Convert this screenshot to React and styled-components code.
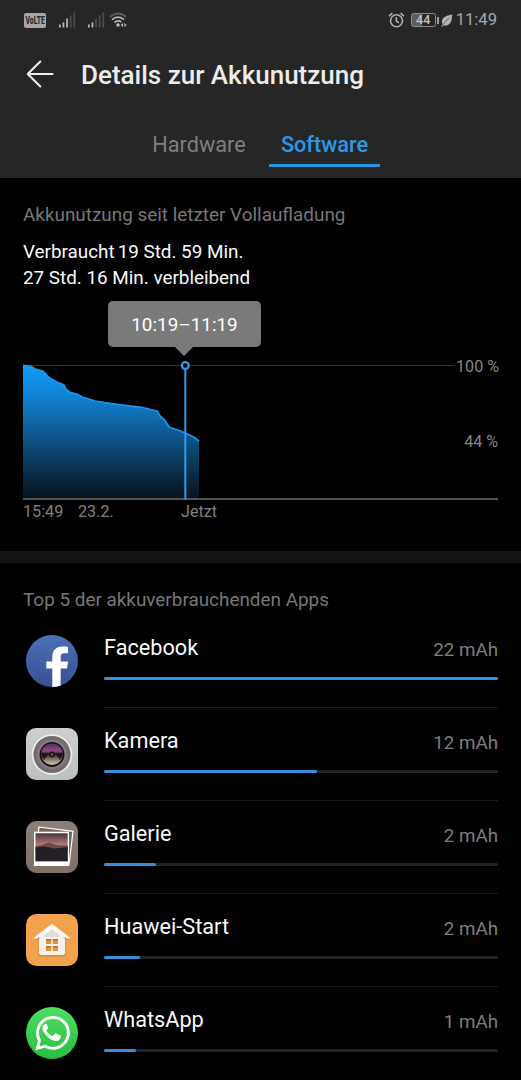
import React from 'react'
import styled, { createGlobalStyle } from 'styled-components'

const GlobalStyle = createGlobalStyle`
	* {
		box-sizing: border-box;
	}
	body {
		margin: 0;
		background: #000;
		font-family: Roboto, 'Liberation Sans', sans-serif;
	}
	svg {
		display: block;
		flex: none;
	}
`

const Screen = styled.div`
	width: 521px;
	height: 1080px;
	overflow: hidden;
	background: #000;
	color: #f2f2f2;
`

const Header = styled.header`
	height: 178px;
	background: #262626;
`

const StatusBar = styled.div`
	display: flex;
	justify-content: space-between;
	height: 40px;
	padding: 0 24px;
`

const StatusGroup = styled.div`
	display: flex;
	align-items: center;
`

const VolteBadge = styled.span`
	display: flex;
	align-items: center;
	justify-content: center;
	width: 22px;
	height: 15px;
	margin-right: 13px;
	border-radius: 2px;
	background: #a6a6a6;
	color: #262626;
	font-size: 10px;
	font-weight: 800;
	line-height: 15px;
`

const Condensed = styled.span`
	transform: scaleX(0.68);
`

const Battery = styled.span`
	display: flex;
	align-items: center;
	justify-content: center;
	width: 25px;
	height: 14px;
	margin-left: 6px;
	border: 1px solid #8c8c8c;
	border-radius: 2.5px;
	background: linear-gradient(90deg, #5e5e5e 44%, transparent 44%);
	color: #c4c4c4;
	font-size: 12.5px;
	font-weight: 500;
	line-height: 12px;
`

const BatteryTip = styled.span`
	width: 2px;
	height: 7px;
	margin: 0 2px 0 1px;
	background: #9c9c9c;
`

const Clock = styled.span`
	margin-left: 3px;
	color: #a8a8a8;
	font-size: 16.6px;
	line-height: 20px;
`

const TitleRow = styled.div`
	display: flex;
	align-items: center;
	gap: 27px;
	height: 68px;
	padding: 0 26px;
`

const Title = styled.h1`
	margin: 2px 0 0;
	color: #ececec;
	font-size: 26px;
	font-weight: 500;
	line-height: 32px;
	white-space: nowrap;
`

const Tabs = styled.nav`
	display: flex;
	justify-content: center;
	gap: 12px;
	height: 57px;
	margin-top: 2px;
`

const Tab = styled.span`
	width: ${({ $active }) => ($active ? 111 : 116)}px;
	border-bottom: 3px solid ${({ $active }) => ($active ? '#2596e4' : 'transparent')};
	color: ${({ $active }) => ($active ? '#2b9ae6' : '#7f7f7f')};
	font-size: 21.7px;
	font-weight: ${({ $active }) => ($active ? 500 : 400)};
	line-height: 69px;
	text-align: center;
`

const Usage = styled.section`
	height: 373px;
	padding: 25px 23px 0;
`

const SectionLabel = styled.h2`
	margin: 0;
	color: #777;
	font-size: 18.9px;
	font-weight: 400;
	line-height: 24px;
	white-space: nowrap;
`

const Summary = styled.p`
	margin: 12px 0 0;
	color: #fafafa;
	font-size: 18.85px;
	line-height: 26px;
	white-space: nowrap;
`

const Spent = styled.span`
	margin-right: 3px;
`

const Tooltip = styled.div`
	position: relative;
	width: 153px;
	height: 46px;
	margin: 10px 0 0 85px;
	border-radius: 5px;
	background: #7a7a7a;
	color: #fff;
	font-size: 18.9px;
	line-height: 47px;
	text-align: center;

	&::after {
		content: '';
		position: absolute;
		top: 100%;
		left: 67px;
		border: 9px solid transparent;
		border-top-color: #7a7a7a;
		border-bottom: 0;
	}
`

const ChartArea = styled.div`
	display: grid;
	grid-template-columns: 475px;
	height: 162px;
	margin-top: 13px;

	> * {
		grid-area: 1 / 1;
	}
`

const Levels = styled.div`
	display: flex;
	flex-direction: column;
	align-items: flex-end;
	gap: 55px;
	margin-top: -4px;
	color: #868686;
	font-size: 16.1px;
	line-height: 21px;

	> :first-child {
		margin-right: -1px;
		margin-bottom: -1px;
	}
`

const Times = styled.div`
	display: flex;
	align-self: end;
	color: #808080;
	font-size: 16.2px;
	line-height: 20px;
`

const Time = styled.span`
	width: ${({ $width }) => $width}px;
`

const Divider = styled.div`
	height: 12px;
	background: #131313;
`

const Apps = styled.section`
	padding: 25px 23px 0;
`

const AppBody = styled.div`
	flex: 1;
	border-bottom: 1px solid #1c1c1c;
`

const AppRow = styled.div`
	display: flex;
	gap: 26px;
	height: 93px;
	padding-left: 3px;

	&:first-of-type {
		margin-top: 3px;
	}

	&:last-of-type ${AppBody} {
		border-bottom: 0;
	}
`

const AppIcon = styled.div`
	padding-top: 20px;
`

const AppLine = styled.div`
	display: flex;
	justify-content: space-between;
	padding-top: 19px;
	line-height: 28px;
`

const AppName = styled.span`
	color: #fafafa;
	font-size: 21.7px;
`

const AppValue = styled.span`
	padding-top: 2px;
	color: #7d7d7d;
	font-size: 18.8px;
`

const Track = styled.div`
	height: 3px;
	margin-top: 13px;
	border-radius: 2px;
	background: #232323;
`

const Fill = styled.div`
	width: ${({ $width }) => $width}px;
	height: 3px;
	border-radius: 2px;
	background: #3490dc;
`

const Signal = ({ strong, gap }) => (
	<svg width='17' height='16' viewBox='0 0 17 16' style={{ marginRight: gap }}>
		{[3, 5, 9, 12, 15].map((h, i) => (
			<rect key={h} x={i * 3.6} y={15.5 - h} width='1.7' height={h} fill={i < strong ? '#b8b8b8' : '#4c4c4c'} />
		))}
	</svg>
)

const Wifi = () => (
	<svg width='19' height='16' viewBox='0 0 19 16' fill='none' strokeWidth='1.7'>
		<path d='M1 5Q9 -2 17 5' stroke='#5c5c5c' />
		<path d='M3 7.7Q9 2.6 15 7.7' stroke='#b8b8b8' />
		<path d='M5.5 10.5Q9 7.6 12.3 10.1' stroke='#b8b8b8' />
		<circle cx='9' cy='13' r='1.7' fill='#c4c4c4' />
		<path d='M14 10.8 11.8 13l2.2 2.2zM15.4 10.8l2.2 2.2-2.2 2.2z' fill='#b8b8b8' />
	</svg>
)

const Alarm = () => (
	<svg width='17' height='16' viewBox='0 0 17 16' fill='none' stroke='#b0b0b0' strokeWidth='1.6'>
		<circle cx='8.5' cy='8.7' r='6' />
		<path d='M8.3 5.2v3.8l2.5 1.8M1 4.2 4.4 1.2M16 4.2 12.6 1.2' />
	</svg>
)

const Leaf = () => (
	<svg width='12' height='13' viewBox='0 0 12 13'>
		<path d='M11.5.5C7 1.2 2.5 2.5 1.2 6c-.7 2 0 3.5.6 4.2L.4 12.3l1 .4 1.2-1.5c3 1 6.2-.5 7.5-3.7C11 5 10.7 2.5 11.5.5z' fill='#b4b4b4' />
		<path d='M2.3 10.5C4 7.8 6 5.7 8.6 4' stroke='#262626' strokeWidth='.5' fill='none' />
	</svg>
)

const BackArrow = () => (
	<svg width='28' height='28' viewBox='0 0 28 28' fill='none' stroke='#f0f0f0' strokeWidth='2' strokeLinecap='round' strokeLinejoin='round'>
		<path d='M14.3 1.5 1.7 14l12.6 12.5M2 14h24.5' />
	</svg>
)

const curve =
	'0,5.3 7,6 13,9.3 20.3,11.3 25.7,17.3 33.7,22 41,25 43,29.3 47,32.3 54.3,34.3 60,37.3 72,41 93.7,44.3 118.7,47.3 134.3,51.3 137,56 141.7,60 146.3,67.3 155.3,70.3 162.3,73 170.3,76.7 176,81'

const BatteryChart = () => (
	<svg width='475' height='141' viewBox='0 0 475 141'>
		<defs>
			<linearGradient id='level' x1='0' y1='5' x2='0' y2='138' gradientUnits='userSpaceOnUse'>
				<stop offset='0' stopColor='#129bfa' />
				<stop offset='.25' stopColor='#1080d0' />
				<stop offset='.55' stopColor='#0d5488' />
				<stop offset='.8' stopColor='#0a2f4b' />
				<stop offset='1' stopColor='#07141f' />
			</linearGradient>
		</defs>
		<path d='M-2 5.5H431' stroke='#343434' />
		<polygon points={`${curve} 176,138 0,138`} fill='url(#level)' />
		<polyline points={curve} fill='none' stroke='#1f93ea' strokeWidth='1.7' />
		<path d='M0 139H475' stroke='#707070' strokeWidth='1.7' />
		<path d='M162.3 9V139.5' stroke='#2f9bec' strokeWidth='2' />
		<circle cx='162.3' cy='5.5' r='3.4' fill='#000' stroke='#2f9bec' strokeWidth='2.2' />
	</svg>
)

const Facebook = () => (
	<svg width='52' height='52' viewBox='0 0 52 52'>
		<defs>
			<linearGradient id='fb' x2='0' y2='1'>
				<stop stopColor='#4a70b8' />
				<stop offset='1' stopColor='#394f91' />
			</linearGradient>
		</defs>
		<circle cx='26' cy='26' r='26' fill='url(#fb)' />
		<path d='M26.3 52V33.5h-6v-7h6v-4.500c0-6.500 4-10.500 10-10.500 2.500 0 4.500.2 5.700.4v6.300h-3.600c-3 0-3.700 1.400-3.700 3.500v4.800h7.300l-1 7h-6.300V50.500Q30.500 52 26.300 52z' fill='#fff' />
	</svg>
)

const Camera = () => (
	<svg width='52' height='52' viewBox='0 0 52 52'>
		<defs>
			<linearGradient id='camBody' x2='0' y2='1'>
				<stop stopColor='#cbcfce' />
				<stop offset='1' stopColor='#bcc1c0' />
			</linearGradient>
			<linearGradient id='lens' x2='0' y2='1'>
				<stop stopColor='#5c2c5c' />
				<stop offset='.35' stopColor='#8d4b86' />
				<stop offset='.5' stopColor='#2c1c2b' />
				<stop offset='.65' stopColor='#6f5c58' />
				<stop offset='1' stopColor='#d8cbaa' />
			</linearGradient>
		</defs>
		<rect width='52' height='52' rx='10' fill='url(#camBody)' />
		<circle cx='26' cy='26.5' r='20.3' fill='#f0eeee' />
		<circle cx='26' cy='26.5' r='18.6' fill='#766a72' />
		<circle cx='26' cy='26.5' r='15' fill='#857a80' />
		<circle cx='26' cy='26.5' r='12.4' fill='#171017' />
		<circle cx='26' cy='26.2' r='10.8' fill='url(#lens)' />
		<path d='M15.5 25 23 25.5 18 32Q15.5 29 15.5 25zM36.5 25 29 25.5 34 32Q36.5 29 36.5 25z' fill='#171017' opacity='.8' />
		<circle cx='26' cy='26.5' r='3' fill='#20151f' />
		<circle cx='26' cy='26.5' r='1.2' fill='#705567' />
	</svg>
)

const Gallery = () => (
	<svg width='52' height='52' viewBox='0 0 52 52'>
		<defs>
			<linearGradient id='galBody' x2='0' y2='1'>
				<stop stopColor='#8d8079' />
				<stop offset='1' stopColor='#806f66' />
			</linearGradient>
			<linearGradient id='sky' x2='0' y2='1'>
				<stop stopColor='#4d3238' />
				<stop offset='.45' stopColor='#b98680' />
			</linearGradient>
		</defs>
		<rect width='52' height='52' rx='11' fill='url(#galBody)' />
		<path d='M13 6 47 10.3 43 43.5 9 40z' fill='#75655f' stroke='#fff' strokeWidth='1.2' />
		<rect x='8' y='10.7' width='35' height='34.3' fill='#fff' />
		<rect x='9.5' y='12.3' width='32.2' height='28' fill='url(#sky)' />
		<path d='M9.5 25 16 24l7-2.5 4 1.5 5 1.2 9.7.4V30H9.5z' fill='#704849' />
		<path d='M9.5 26.5 18 25.5l11 2 12.7-1.5v14.3H9.5z' fill='#241f26' />
	</svg>
)

const Home = () => (
	<svg width='52' height='52' viewBox='0 0 52 52'>
		<rect width='52' height='52' rx='10.5' fill='#f2a24c' />
		<path d='M26 10.5 8 25.5h4.5V42.5H39.5V25.5H44z' fill='#b6772e' opacity='.55' />
		<path d='M13 22.5 26 13l13 9.5V39q0 2-2 2H15q-2 0-2-2z' fill='#f6f1e9' />
		<path d='M13 26 26 15.5 39 26v-3H13z' fill='#e3ddd8' />
		<path d='M26 9.7 7.8 23.8q1.2 1.2 3.2.7L26 14l15 10.5q2 .5 3.2-.7z' fill='#fff' />
		<path d='M20 25h5.2v5H20zM26.8 25H32v5h-5.2zM20 32h5.2v5H20zM26.8 32H32v5h-5.2z' fill='#dd9242' />
		<path d='M20 25h5.2v1.5H20zM26.8 25H32v1.5h-5.2zM20 32h5.2v1.5H20zM26.8 32H32v1.5h-5.2z' fill='#b8752f' />
	</svg>
)

const WhatsApp = () => (
	<svg width='52' height='52' viewBox='0 0 52 52'>
		<defs>
			<linearGradient id='wa' x2='0' y2='1'>
				<stop stopColor='#52dc65' />
				<stop offset='1' stopColor='#28bf3e' />
			</linearGradient>
		</defs>
		<circle cx='26' cy='26' r='26' fill='url(#wa)' />
		<path d='M11.4 41.3 13.5 33.3A15.4 15.4 0 1 1 19.3 39.2z' fill='none' stroke='#fff' strokeWidth='2.9' />
		<path d='M21 17.8c-.5-1-1-.9-1.6-.9-1 0-3 1.2-3 4.2 0 3.2 2.5 6.1 4.8 8.4 3.2 3.2 6.3 4.6 8.8 4.6 2.7 0 4.8-1.9 4.9-4.3 0-1-.1-1-.6-1.3l-4-2c-.7-.3-1.1-.2-1.5.3l-1.5 1.900c-.4.4-.7.4-1.3.1-2.4-1.1-4.3-2.8-5.5-4.9-.3-.6 0-.8.3-1.2l1.2-1.5c.2-.4.2-.7 0-1.1z' fill='#fff' />
	</svg>
)

const apps = [
	{ name: 'Facebook', value: '22 mAh', width: 394, Icon: Facebook },
	{ name: 'Kamera', value: '12 mAh', width: 213, Icon: Camera },
	{ name: 'Galerie', value: '2 mAh', width: 52, Icon: Gallery },
	{ name: 'Huawei-Start', value: '2 mAh', width: 36, Icon: Home },
	{ name: 'WhatsApp', value: '1 mAh', width: 32, Icon: WhatsApp },
]

const App = () => (
	<Screen>
		<GlobalStyle />
		<Header>
			<StatusBar>
				<StatusGroup>
					<VolteBadge>
						<Condensed>VoLTE</Condensed>
					</VolteBadge>
					<Signal strong={3} gap={12} />
					<Signal strong={2} gap={4} />
					<Wifi />
				</StatusGroup>
				<StatusGroup>
					<Alarm />
					<Battery>44</Battery>
					<BatteryTip />
					<Leaf />
					<Clock>11:49</Clock>
				</StatusGroup>
			</StatusBar>
			<TitleRow>
				<BackArrow />
				<Title>Details zur Akkunutzung</Title>
			</TitleRow>
			<Tabs>
				<Tab>Hardware</Tab>
				<Tab $active>Software</Tab>
			</Tabs>
		</Header>
		<Usage>
			<SectionLabel>Akkunutzung seit letzter Vollaufladung</SectionLabel>
			<Summary>
				<Spent>Verbraucht</Spent>19 Std. 59 Min.
				<br />
				27 Std. 16 Min. verbleibend
			</Summary>
			<Tooltip>10:19–11:19</Tooltip>
			<ChartArea>
				<BatteryChart />
				<Levels>
					<span>100 %</span>
					<span>44 %</span>
				</Levels>
				<Times>
					<Time $width={55}>15:49</Time>
					<Time $width={103}>23.2.</Time>
					<Time $width={60}>Jetzt</Time>
				</Times>
			</ChartArea>
		</Usage>
		<Divider />
		<Apps>
			<SectionLabel>Top 5 der akkuverbrauchenden Apps</SectionLabel>
			{apps.map(({ name, value, width, Icon }) => (
				<AppRow key={name}>
					<AppIcon>
						<Icon />
					</AppIcon>
					<AppBody>
						<AppLine>
							<AppName>{name}</AppName>
							<AppValue>{value}</AppValue>
						</AppLine>
						<Track>
							<Fill $width={width} />
						</Track>
					</AppBody>
				</AppRow>
			))}
		</Apps>
	</Screen>
)

export default App
